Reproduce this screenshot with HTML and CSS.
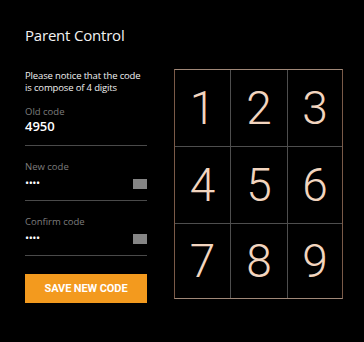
FILE: index.html
```html
<!DOCTYPE html>
<html>
<head>
<meta charset="utf-8">
<link rel="stylesheet" href="styles.css">
</head>
<body>
<div class="screen">
  <div class="form">
    <h1 class="title">Parent Control</h1>
    <p class="notice">Please notice that the code<br>is compose of 4 digits</p>
    <div class="field">
      <div class="label">Old code</div>
      <div class="value">4950</div>
    </div>
    <div class="field">
      <div class="label">New code</div>
      <div class="row"><span class="dots">••••</span><span class="toggle"></span></div>
    </div>
    <div class="field">
      <div class="label">Confirm code</div>
      <div class="row"><span class="dots">••••</span><span class="toggle"></span></div>
    </div>
    <button class="save">SAVE NEW CODE</button>
  </div>
  <div class="pad">
    <div class="key">1</div><div class="key">2</div><div class="key">3</div>
    <div class="key">4</div><div class="key">5</div><div class="key">6</div>
    <div class="key">7</div><div class="key">8</div><div class="key">9</div>
  </div>
</div>
</body>
</html>
```
FILE: styles.css
```css
html, body {
  margin: 0;
  padding: 0;
  background: #000;
}
body {
  width: 364px;
  height: 342px;
  overflow: hidden;
  font-family: "Open Sans", "Noto Sans", sans-serif;
  color: #fff;
}
.screen {
  display: flex;
  align-items: flex-start;
  padding-left: 25px;
}
.form {
  width: 122px;
  display: flex;
  flex-direction: column;
}
.title {
  margin: 25px 0 0;
  font-size: 15px;
  font-weight: 400;
  line-height: 20px;
  letter-spacing: -0.2px;
  color: #f2f2f2;
}
.notice {
  margin: 25px 0 0;
  font-size: 9.5px;
  line-height: 11.5px;
  letter-spacing: -0.15px;
  color: #f0f0f0;
}
.field {
  border-bottom: 1px solid #4a4a4a;
  display: flex;
  flex-direction: column;
  padding-top: 15px;
}
.field:nth-of-type(1) { padding-top: 13px; }
.label {
  font-size: 9.5px;
  line-height: 12px;
  color: #7d7d7d;
}
.value {
  font-size: 13px;
  font-weight: 600;
  line-height: 16px;
  color: #fff;
  margin-top: 0;
  margin-bottom: 11px;
}
.row {
  display: flex;
  justify-content: space-between;
  align-items: center;
  height: 14px;
  margin-top: 3px;
  margin-bottom: 10px;
}
.dots {
  font-size: 11px;
  letter-spacing: -0.5px;
  color: #fff;
  line-height: 12px;
}
.toggle {
  width: 14px;
  height: 10px;
  background: #858585;
  margin-top: 2px;
}
.save {
  margin-top: 18px;
  height: 29px;
  border: none;
  background: #f39a1e;
  color: #fff;
  font-family: Roboto, "Open Sans", sans-serif;
  font-weight: 700;
  font-size: 11px;
  letter-spacing: -0.1px;
  padding: 0;
}
.pad {
  margin-left: 27px;
  margin-top: 69px;
  width: 169px;
  height: 230px;
  box-sizing: border-box;
  border: 1px solid #7a5a48;
  border-top-color: #a08878;
  border-bottom-color: #a08878;
  display: grid;
  grid-template-columns: 56px 57px 1fr;
  grid-template-rows: 77px 77px 1fr;
}
.key {
  display: flex;
  align-items: center;
  justify-content: center;
  font-family: Roboto, sans-serif;
  font-weight: 300;
  font-size: 46px;
  color: #f2d5bf;
  border-right: 1px solid #4e4e4e;
  border-bottom: 1px solid #4e4e4e;
}
.key:nth-child(3n) { border-right: none; }
.key:nth-child(n+7) { border-bottom: none; }
```
